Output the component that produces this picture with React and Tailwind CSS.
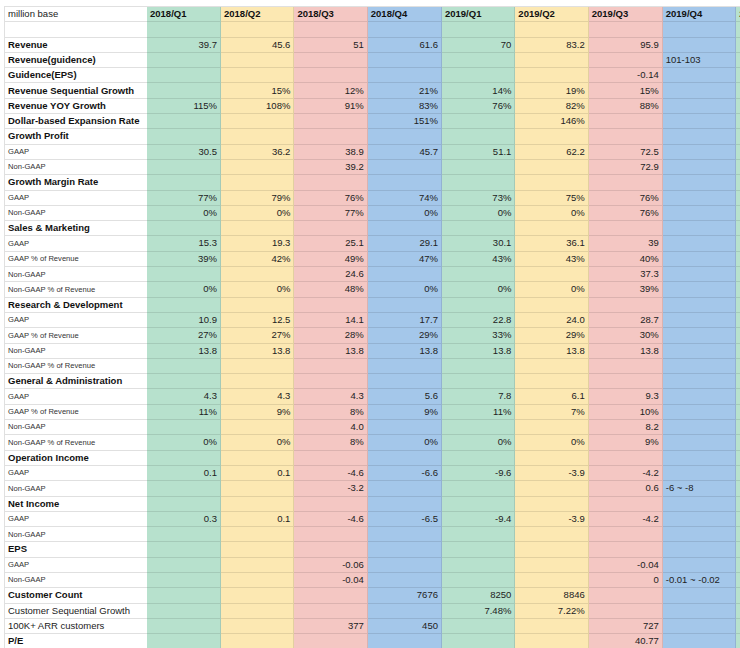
import React from "react";

const COLS = [
  "bg-[#b7e1cd]",
  "bg-[#fce8b2]",
  "bg-[#f4c7c3]",
  "bg-[#a4c7ea]",
  "bg-[#b7e1cd]",
  "bg-[#fce8b2]",
  "bg-[#f4c7c3]",
  "bg-[#a4c7ea]",
  "bg-[#b7e1cd]",
];

const HEAD = ["2018/Q1", "2018/Q2", "2018/Q3", "2018/Q4", "2019/Q1", "2019/Q2", "2019/Q3", "2019/Q4", "2020/Q1"];

const E = "";
const ROWS = [
  { label: "", k: "n", v: [] },
  { label: "Revenue", k: "b", v: ["39.7", "45.6", "51", "61.6", "70", "83.2", "95.9"] },
  { label: "Revenue(guidence)", k: "b", v: [E, E, E, E, E, E, E, "101-103"] },
  { label: "Guidence(EPS)", k: "b", v: [E, E, E, E, E, E, "-0.14"] },
  { label: "Revenue Sequential Growth", k: "b", v: [E, "15%", "12%", "21%", "14%", "19%", "15%"] },
  { label: "Revenue YOY Growth", k: "b", v: ["115%", "108%", "91%", "83%", "76%", "82%", "88%"] },
  { label: "Dollar-based Expansion Rate", k: "b", v: [E, E, E, "151%", E, "146%"] },
  { label: "Growth Profit", k: "b", v: [] },
  { label: "GAAP", k: "s", v: ["30.5", "36.2", "38.9", "45.7", "51.1", "62.2", "72.5"] },
  { label: "Non-GAAP", k: "s", v: [E, E, "39.2", E, E, E, "72.9"] },
  { label: "Growth Margin Rate", k: "b", v: [] },
  { label: "GAAP", k: "s", v: ["77%", "79%", "76%", "74%", "73%", "75%", "76%"] },
  { label: "Non-GAAP", k: "s", v: ["0%", "0%", "77%", "0%", "0%", "0%", "76%"] },
  { label: "Sales & Marketing", k: "b", v: [] },
  { label: "GAAP", k: "s", v: ["15.3", "19.3", "25.1", "29.1", "30.1", "36.1", "39"] },
  { label: "GAAP % of Revenue", k: "s", v: ["39%", "42%", "49%", "47%", "43%", "43%", "40%"] },
  { label: "Non-GAAP", k: "s", v: [E, E, "24.6", E, E, E, "37.3"] },
  { label: "Non-GAAP % of Revenue", k: "s", v: ["0%", "0%", "48%", "0%", "0%", "0%", "39%"] },
  { label: "Research & Development", k: "b", v: [] },
  { label: "GAAP", k: "s", v: ["10.9", "12.5", "14.1", "17.7", "22.8", "24.0", "28.7"] },
  { label: "GAAP % of Revenue", k: "s", v: ["27%", "27%", "28%", "29%", "33%", "29%", "30%"] },
  { label: "Non-GAAP", k: "s", v: ["13.8", "13.8", "13.8", "13.8", "13.8", "13.8", "13.8"] },
  { label: "Non-GAAP % of Revenue", k: "s", v: [] },
  { label: "General & Administration", k: "b", v: [] },
  { label: "GAAP", k: "s", v: ["4.3", "4.3", "4.3", "5.6", "7.8", "6.1", "9.3"] },
  { label: "GAAP % of Revenue", k: "s", v: ["11%", "9%", "8%", "9%", "11%", "7%", "10%"] },
  { label: "Non-GAAP", k: "s", v: [E, E, "4.0", E, E, E, "8.2"] },
  { label: "Non-GAAP % of Revenue", k: "s", v: ["0%", "0%", "8%", "0%", "0%", "0%", "9%"] },
  { label: "Operation Income", k: "b", v: [] },
  { label: "GAAP", k: "s", v: ["0.1", "0.1", "-4.6", "-6.6", "-9.6", "-3.9", "-4.2"] },
  { label: "Non-GAAP", k: "s", v: [E, E, "-3.2", E, E, E, "0.6", "-6 ~ -8"] },
  { label: "Net Income", k: "b", v: [] },
  { label: "GAAP", k: "s", v: ["0.3", "0.1", "-4.6", "-6.5", "-9.4", "-3.9", "-4.2"] },
  { label: "Non-GAAP", k: "s", v: [] },
  { label: "EPS", k: "b", v: [] },
  { label: "GAAP", k: "s", v: [E, E, "-0.06", E, E, E, "-0.04"] },
  { label: "Non-GAAP", k: "s", v: [E, E, "-0.04", E, E, E, "0", "-0.01 ~ -0.02"] },
  { label: "Customer Count", k: "b", v: [E, E, E, "7676", "8250", "8846"] },
  { label: "Customer Sequential Growth", k: "n", v: [E, E, E, E, "7.48%", "7.22%"] },
  { label: "100K+ ARR customers", k: "n", v: [E, E, "377", "450", E, E, "727"] },
  { label: "P/E", k: "b", v: [E, E, E, E, E, E, "40.77"] },
];

function LabelCell({ label, k }) {
  const cls =
    k === "b"
      ? "text-[9.5px] font-bold text-[#111]"
      : k === "s"
      ? "text-[7.6px] text-[#333]"
      : "text-[9.5px] text-[#222]";
  return (
    <div className="flex items-center h-full pl-[3px] bg-white border-b border-black/[0.12] overflow-hidden whitespace-nowrap">
      <span className={cls}>{label}</span>
    </div>
  );
}

function ValueCell({ ci, value }) {
  const left = ci === 7;
  return (
    <div
      className={
        "flex items-center h-full border-b border-r border-black/[0.1] overflow-hidden whitespace-nowrap text-[9.5px] text-[#222] " +
        COLS[ci] +
        (left ? " justify-start pl-[3px]" : " justify-end pr-[3px]")
      }
    >
      {value}
    </div>
  );
}

export default function App() {
  return (
    <div className="w-[740px] h-[648px] overflow-hidden bg-white font-['Liberation_Sans',Arial,sans-serif]">
      <div className="pt-[6px] pl-[4px]">
        <div className="grid grid-cols-[142px_74px_73.4px_73.4px_74.2px_73.4px_73.4px_74px_73.5px_20px] auto-rows-[15.3px] border-l border-t border-black/[0.12]">
          {/* header */}
          <div className="flex items-center h-full pl-[3px] bg-white border-b border-black/[0.12] whitespace-nowrap">
            <span className="text-[9.5px] text-[#222]">million base</span>
          </div>
          {HEAD.map((h, i) => (
            <div
              key={h}
              className={
                "flex items-center h-full pl-[3px] border-b border-r border-black/[0.1] overflow-hidden whitespace-nowrap text-[9.5px] font-bold text-[#111] " +
                COLS[i]
              }
            >
              {h}
            </div>
          ))}
          {ROWS.map((r, ri) => (
            <React.Fragment key={ri}>
              <LabelCell label={r.label} k={r.k} />
              {COLS.map((_, ci) => (
                <ValueCell key={ci} ci={ci} value={r.v[ci] || ""} />
              ))}
            </React.Fragment>
          ))}
        </div>
      </div>
    </div>
  );
}
